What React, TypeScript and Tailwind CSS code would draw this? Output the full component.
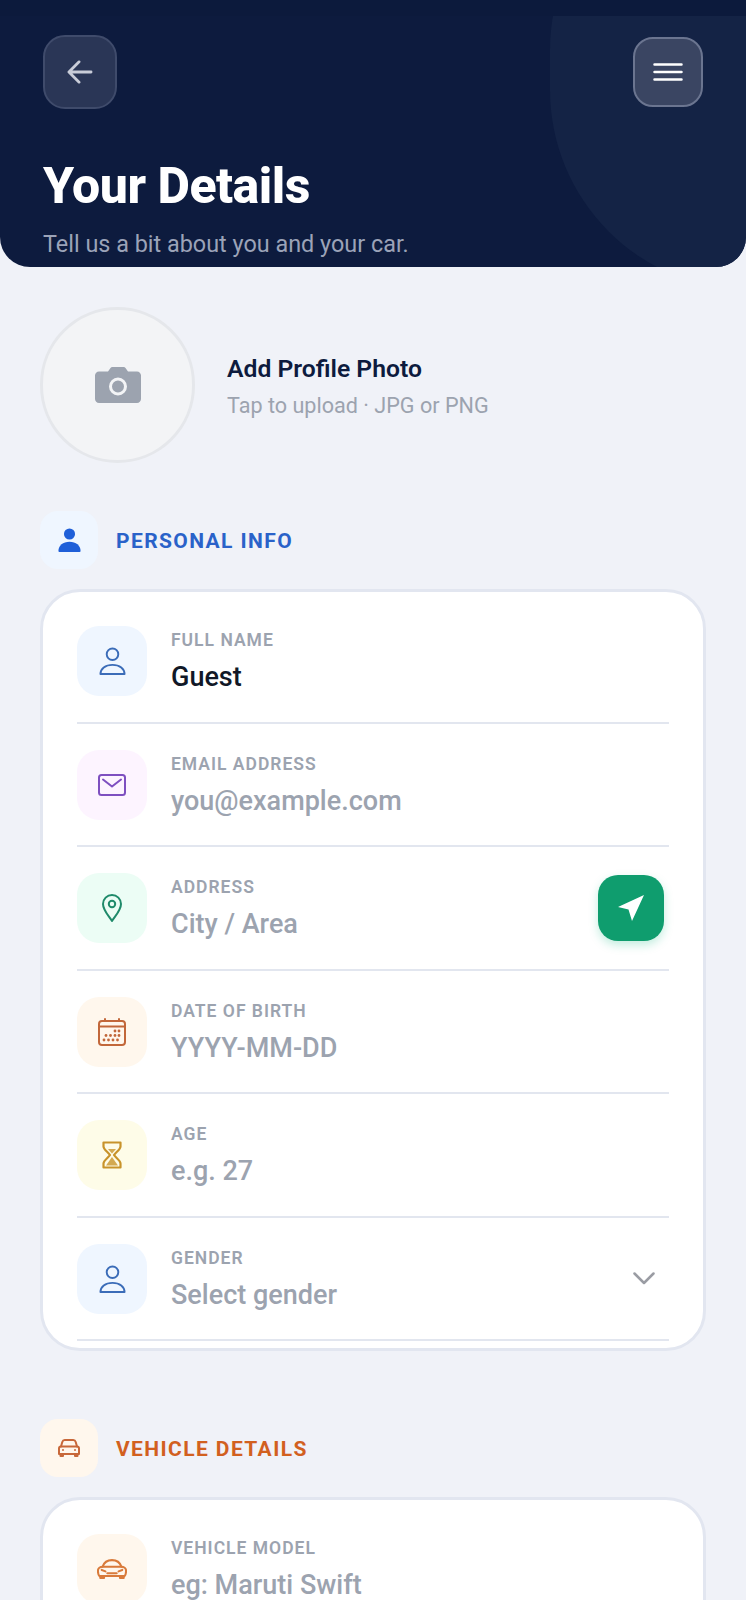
import React from 'react';

function PersonOutline({ color }: { color: string }) {
  return (
    <svg width="27" height="28" viewBox="0 0 28 29" fill="none" stroke={color} strokeWidth="2" strokeLinejoin="round">
      <circle cx="14" cy="7.500" r="6" />
      <path d="M1.500 28c0-5.500 5-9.500 12.500-9.500S26.500 22.500 26.500 28h-25z" />
    </svg>
  );
}

function MailIcon({ color }: { color: string }) {
  return (
    <svg width="28" height="22" viewBox="0 0 28 22" fill="none" stroke={color} strokeWidth="2" strokeLinejoin="round">
      <rect x="1" y="1" width="26" height="20" rx="2.500" />
      <path d="M5 5.500l9 7 9-7" strokeLinecap="round" />
    </svg>
  );
}

function PinIcon({ color }: { color: string }) {
  return (
    <svg width="20" height="28" viewBox="0 0 20 28" fill="none" stroke={color} strokeWidth="2" strokeLinejoin="round">
      <path d="M10 27C6 21 1 16 1 10a9 9 0 0 1 18 0c0 6-5 11-9 17z" />
      <circle cx="10" cy="10" r="3.200" />
    </svg>
  );
}

function CalendarIcon({ color }: { color: string }) {
  const dots = [
    [17, 13], [21, 13], [8, 17.500], [12.500, 17.500], [17, 17.500], [21, 17.500], [6, 22], [10.500, 22], [15, 22], [19.500, 22],
  ];
  return (
    <svg width="28" height="28" viewBox="0 0 28 28" fill="none" stroke={color} strokeWidth="2" strokeLinecap="round">
      <rect x="1" y="3" width="26" height="24" rx="3" />
      <path d="M1 8.500h26M7 1v2M21 1v2" />
      {dots.map((d, i) => (
        <circle key={i} cx={d[0]} cy={d[1]} r="1.400" fill={color} stroke="none" />
      ))}
    </svg>
  );
}

function HourglassIcon({ color }: { color: string }) {
  return (
    <svg width="20" height="28" viewBox="0 0 20 28" fill="none" stroke={color} strokeWidth="2.200" strokeLinejoin="round">
      <path d="M1.500 1.500h17v4c0 3-5 6-6.500 8.500 1.500 2.500 6.500 5.500 6.500 8.500v4h-17v-4c0-3 5-6 6.500-8.500C6.500 11.500 1.500 8.500 1.500 5.500v-4z" />
      <path d="M10 16l6 8.500H4L10 16zM6 8h8l-4 4.500L6 8z" fill={color} stroke="none" opacity="0.8" />
    </svg>
  );
}

function CarFront({ color }: { color: string }) {
  return (
    <svg width="22" height="18" viewBox="0 0 22 18" fill="none" stroke={color} strokeWidth="2" strokeLinejoin="round" strokeLinecap="round">
      <path d="M3 7.500l1.300-4.500C4.700 1.700 5.500 1 6.700 1h8.600c1.200 0 2 .7 2.400 2L19 7.500" />
      <path d="M1 9.500c0-1.200.9-2 2-2h16c1.100 0 2 .8 2 2V15H1V9.500z" />
      <path d="M2.500 15v2h2.500v-2M17 15v2h2.500v-2" />
      <circle cx="5" cy="11" r="1" fill={color} stroke="none" />
      <circle cx="17" cy="11" r="1" fill={color} stroke="none" />
    </svg>
  );
}

function CarSport({ color }: { color: string }) {
  return (
    <svg width="30" height="20" viewBox="0 0 32 21" fill="none" stroke={color} strokeWidth="2.200" strokeLinejoin="round" strokeLinecap="round">
      <path d="M6 8c1.500-4.500 4-7 10-7s8.500 2.500 10 7" />
      <path d="M1 12.500C1 9.500 3.500 8 6 8h20c2.500 0 5 1.500 5 4.500 0 2.500-.5 4-1.500 5.500h-27C1.500 16.500 1 15 1 12.500z" />
      <path d="M5 11.500l4 1.500M27 11.500l-4 1.500M11 15h10M3.500 18v2h4v-2M24.500 18v2h4v-2" />
    </svg>
  );
}

function IconBox({ bg, children }: { bg: string; children: React.ReactNode }) {
  return <div className={`flex h-[70px] w-[70px] shrink-0 items-center justify-center rounded-[22px] ${bg}`}>{children}</div>;
}

function FieldRow({
  label,
  value,
  filled,
  bg,
  icon,
  right,
}: {
  label: string;
  value: string;
  filled?: boolean;
  bg: string;
  icon: React.ReactNode;
  right?: React.ReactNode;
}) {
  return (
    <div className="flex items-center gap-6 border-b-2 border-[#e2e6ef] pt-[26px] pb-[25.5px]">
      <IconBox bg={bg}>{icon}</IconBox>
      <div className="flex flex-1 flex-col gap-[10px]">
        <span className="text-[17.5px] leading-[22px] font-semibold tracking-[1px] text-[#9ca3af]">{label}</span>
        <span className={`text-[27px] leading-[32px] font-medium ${filled ? 'text-[#111827]' : 'text-[#9ca3af]'}`}>{value}</span>
      </div>
      {right}
    </div>
  );
}

function SectionHead({ bg, color, label, icon }: { bg: string; color: string; label: string; icon: React.ReactNode }) {
  return (
    <div className="flex items-center gap-[18px]">
      <div className={`flex h-[58px] w-[58px] items-center justify-center rounded-[18px] ${bg}`}>{icon}</div>
      <span className={`pt-[3px] text-[21px] font-bold tracking-[1.4px] ${color}`}>{label}</span>
    </div>
  );
}

function Card({ children }: { children: React.ReactNode }) {
  return <div className="mt-5 rounded-[40px] border-[3px] border-[#e2e6f0] bg-white px-[34px] pt-[8px] pb-[7px]">{children}</div>;
}

export default function App() {
  return (
    <div className="h-[1600px] overflow-hidden bg-[#f0f2f8] font-['Roboto',sans-serif]">
      <header className="relative h-[267px] overflow-hidden rounded-b-[30px] bg-[#0d1b3e]">
        <div className="absolute top-[-150px] left-[550px] h-[440px] w-[400px] rounded-[200px] bg-[#142345]" />
        <div className="relative h-4 bg-[#0c1a3c]" />
        <div className="relative flex items-center justify-between pt-[19px] pr-[43px] pl-[43px]">
          <button className="flex h-[74px] w-[74px] items-center justify-center rounded-[22px] border-2 border-[#3f4b6b] bg-[#2a3656]">
            <svg width="26" height="24" viewBox="0 0 28 26" fill="none" stroke="#c8ccd8" strokeWidth="3" strokeLinecap="round" strokeLinejoin="round">
              <path d="M26 13H3M13 2L2 13l11 11" />
            </svg>
          </button>
          <button className="flex h-[70px] w-[70px] items-center justify-center rounded-[20px] border-2 border-[#6b7590] bg-[#3a4562]">
            <svg width="30" height="18" viewBox="0 0 30 18" fill="none" stroke="#ffffff" strokeWidth="2.500" strokeLinecap="round">
              <path d="M1.500 1.500h27M1.500 9h27M1.500 16.500h27" />
            </svg>
          </button>
        </div>
        <div className="relative px-[43px]">
          <h1 className="mt-[49px] text-[50px] leading-[56px] font-extrabold tracking-[-0.5px] text-white">Your Details</h1>
          <p className="mt-[16px] text-[23.4px] leading-[28px] text-[#9ba3b8]">Tell us a bit about you and your car.</p>
        </div>
      </header>

      <main className="px-10 pt-10">
        <div className="flex items-center gap-[32px]">
          <div className="flex h-[156px] w-[155px] items-center justify-center rounded-full border-[3px] border-[#e5e7eb] bg-[#f3f4f6]">
            <svg width="46" height="36" viewBox="0 0 46 36">
              <path
                d="M4 4.500h9L15.500 1c.4-.6 1-1 1.800-1h11.400c.8 0 1.400.4 1.800 1L33 4.500h9c2.200 0 4 1.800 4 4V32c0 2.200-1.800 4-4 4H4c-2.200 0-4-1.800-4-4V8.500c0-2.200 1.800-4 4-4z"
                fill="#9ca3af"
              />
              <circle cx="23" cy="19.500" r="7.500" fill="#9ca3af" stroke="#f3f4f6" strokeWidth="3" />
            </svg>
          </div>
          <div className="flex flex-col gap-[9px] pt-[2px]">
            <span className="text-[24.7px] leading-[30px] font-semibold text-[#0d1b3e]">Add Profile Photo</span>
            <span className="text-[21.6px] leading-[26px] text-[#9ca3af]">Tap to upload · JPG or PNG</span>
          </div>
        </div>

        <div className="mt-[48px]">
          <SectionHead
            bg="bg-[#eff6ff]"
            color="text-[#2a62c9]"
            label="PERSONAL INFO"
            icon={
              <svg width="23" height="24" viewBox="0 0 24 26" fill="#1f5fd8">
                <circle cx="12" cy="6.500" r="6" />
                <path d="M0 25c0-6 5-10 12-10s12 4 12 10c0 .6-.4 1-1 1H1c-.6 0-1-.4-1-1z" />
              </svg>
            }
          />
          <Card>
            <FieldRow label="FULL NAME" value="Guest" filled bg="bg-[#eff6ff]" icon={<PersonOutline color="#3b6cb8" />} />
            <FieldRow label="EMAIL ADDRESS" value="you@example.com" bg="bg-[#fdf4ff]" icon={<MailIcon color="#7e4fc0" />} />
            <FieldRow
              label="ADDRESS"
              value="City / Area"
              bg="bg-[#ecfdf5]"
              icon={<PinIcon color="#1f8a6a" />}
              right={
                <button className="mr-[5px] flex h-[66px] w-[66px] items-center justify-center rounded-[20px] bg-[#0f9d6e] shadow-[0_4px_10px_rgba(16,185,129,0.25)]">
                  <svg width="28" height="28" viewBox="0 0 28 28" fill="#ffffff">
                    <path d="M27 1L15 27l-3.500-11.500L1 13z" />
                  </svg>
                </button>
              }
            />
            <FieldRow label="DATE OF BIRTH" value="YYYY-MM-DD" bg="bg-[#fff7ed]" icon={<CalendarIcon color="#c2673a" />} />
            <FieldRow label="AGE" value="e.g. 27" bg="bg-[#fefce8]" icon={<HourglassIcon color="#c8932a" />} />
            <FieldRow
              label="GENDER"
              value="Select gender"
              bg="bg-[#eff6ff]"
              icon={<PersonOutline color="#3b6cb8" />}
              right={
                <svg className="mr-[14px]" width="22" height="13" viewBox="0 0 22 13" fill="none" stroke="#9a9ca3" strokeWidth="2.500" strokeLinecap="round" strokeLinejoin="round">
                  <path d="M1.500 1.500L11 11l9.500-9.500" />
                </svg>
              }
            />
          </Card>
        </div>

        <div className="mt-[68px]">
          <SectionHead bg="bg-[#fff7ed]" color="text-[#d2601f]" label="VEHICLE DETAILS" icon={<CarFront color="#c8683a" />} />
          <Card>
            <FieldRow label="VEHICLE MODEL" value="eg: Maruti Swift" bg="bg-[#fff7ed]" icon={<CarSport color="#d97a3a" />} />
          </Card>
        </div>
      </main>
    </div>
  );
}
